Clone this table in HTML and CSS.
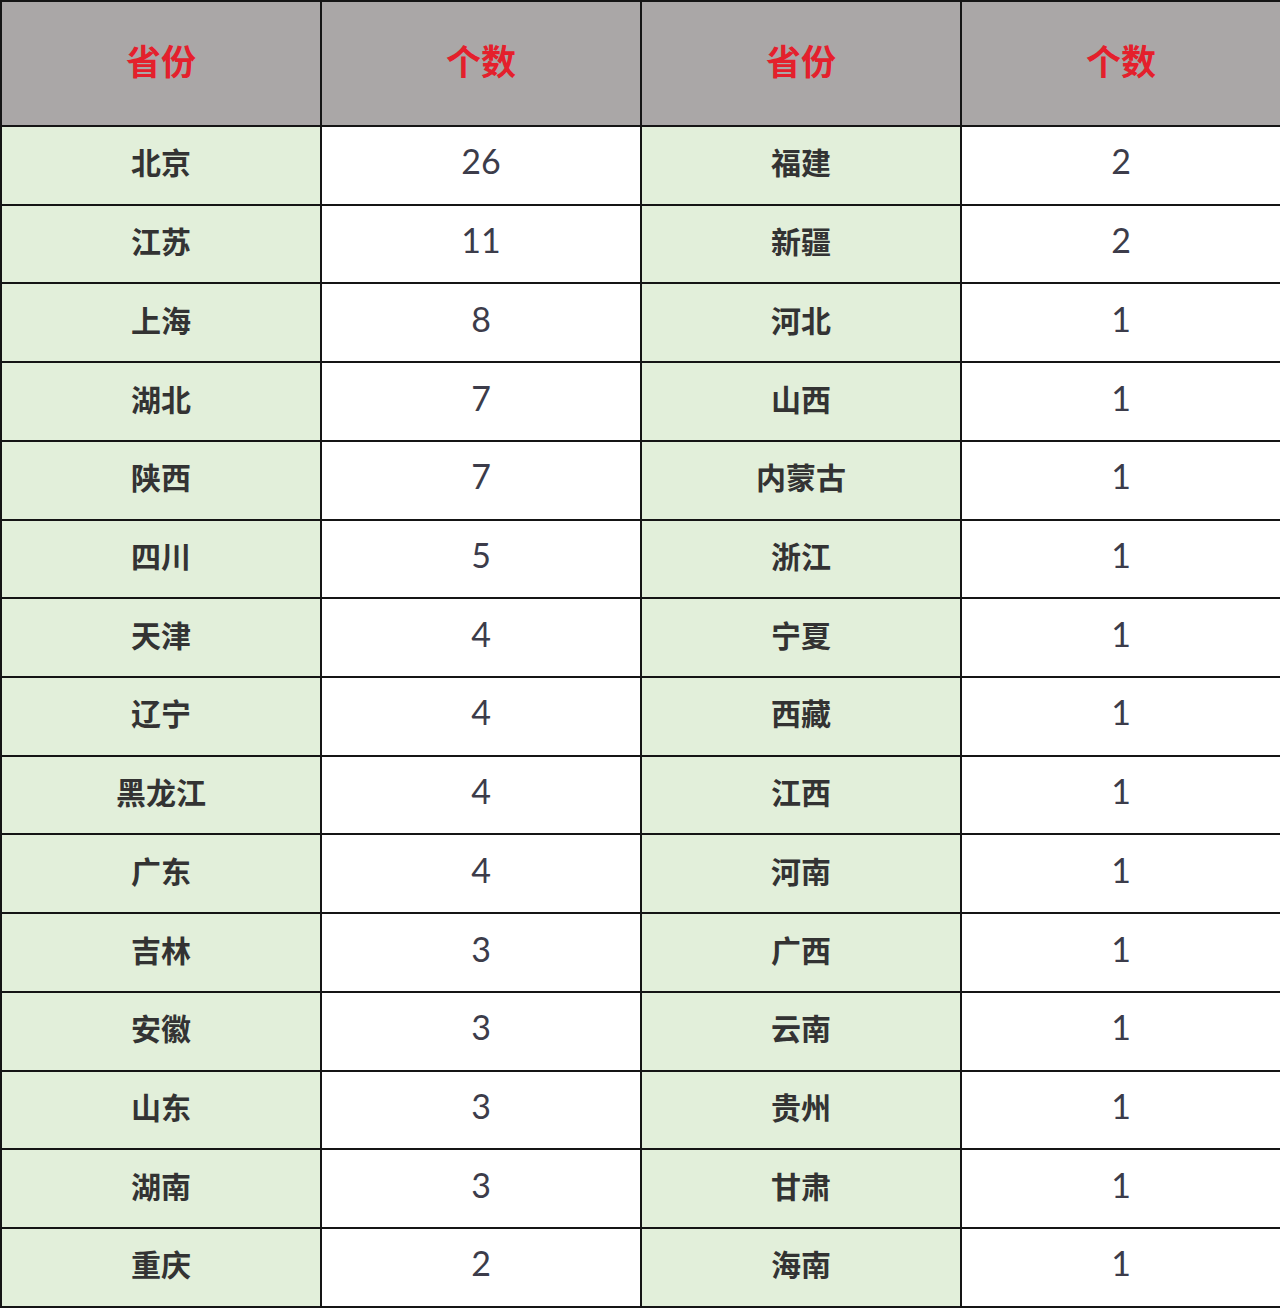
FILE: index.html
```html
<!DOCTYPE html>
<html lang="zh">
<head>
<meta charset="utf-8">
<link rel="stylesheet" href="styles.css">
</head>
<body>
<table class="grid">
  <colgroup><col class="c"><col class="c"><col class="c"><col class="c"></colgroup>
  <thead>
    <tr class="head"><th>省份</th><th>个数</th><th>省份</th><th>个数</th></tr>
  </thead>
  <tbody>
    <tr><td class="prov">北京</td><td class="num">26</td><td class="prov">福建</td><td class="num">2</td></tr>
    <tr><td class="prov">江苏</td><td class="num">11</td><td class="prov">新疆</td><td class="num">2</td></tr>
    <tr><td class="prov">上海</td><td class="num">8</td><td class="prov">河北</td><td class="num">1</td></tr>
    <tr><td class="prov">湖北</td><td class="num">7</td><td class="prov">山西</td><td class="num">1</td></tr>
    <tr><td class="prov">陕西</td><td class="num">7</td><td class="prov">内蒙古</td><td class="num">1</td></tr>
    <tr><td class="prov">四川</td><td class="num">5</td><td class="prov">浙江</td><td class="num">1</td></tr>
    <tr><td class="prov">天津</td><td class="num">4</td><td class="prov">宁夏</td><td class="num">1</td></tr>
    <tr><td class="prov">辽宁</td><td class="num">4</td><td class="prov">西藏</td><td class="num">1</td></tr>
    <tr><td class="prov">黑龙江</td><td class="num">4</td><td class="prov">江西</td><td class="num">1</td></tr>
    <tr><td class="prov">广东</td><td class="num">4</td><td class="prov">河南</td><td class="num">1</td></tr>
    <tr><td class="prov">吉林</td><td class="num">3</td><td class="prov">广西</td><td class="num">1</td></tr>
    <tr><td class="prov">安徽</td><td class="num">3</td><td class="prov">云南</td><td class="num">1</td></tr>
    <tr><td class="prov">山东</td><td class="num">3</td><td class="prov">贵州</td><td class="num">1</td></tr>
    <tr><td class="prov">湖南</td><td class="num">3</td><td class="prov">甘肃</td><td class="num">1</td></tr>
    <tr><td class="prov">重庆</td><td class="num">2</td><td class="prov">海南</td><td class="num">1</td></tr>
  </tbody>
</table>
</body>
</html>
```

FILE: styles.css
```css
html, body {
  margin: 0;
  padding: 0;
  background: #ffffff;
}
.grid {
  width: 1280px;
  border-collapse: collapse;
  table-layout: fixed;
  font-family: "Noto Sans CJK SC", sans-serif;
}
.c { width: 320px; }
.grid th, .grid td {
  border: 2px solid #151515;
  text-align: center;
  vertical-align: middle;
  padding: 0 0 8px 0;
  box-sizing: border-box;
}
.head th {
  height: 125px;
  background: #aaa7a7;
  color: #e4202c;
  font-size: 35px;
  font-weight: 700;
  line-height: 1;
}
.grid tbody td {
  height: 78.73px;
}
.prov {
  background: #e2efda;
  color: #333333;
  font-size: 30px;
  font-weight: 700;
  line-height: 1;
}
.num {
  background: #ffffff;
  color: #3c3c4a;
  font-family: "Lato", sans-serif;
  font-size: 34px;
  font-weight: 400;
  line-height: 1;
}
```
